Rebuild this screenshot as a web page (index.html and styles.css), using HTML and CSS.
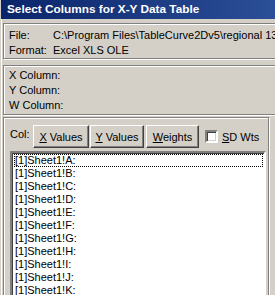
FILE: index.html
```html
<!DOCTYPE html>
<html>
<head>
<meta charset="utf-8">
<link rel="stylesheet" href="styles.css">
</head>
<body>
<div class="window">
  <div class="titlebar">Select Columns for X-Y Data Table</div>
  <div class="client">
    <div class="group group-open file-group">
      <div class="kv"><span class="k">File:</span><span class="v">C:\Program Files\TableCurve2Dv5\regional 13</span></div>
      <div class="kv"><span class="k">Format:</span><span class="v">Excel XLS OLE</span></div>
    </div>
    <div class="group group-open cols-group">
      <div class="line">X Column:</div>
      <div class="line">Y Column:</div>
      <div class="line">W Column:</div>
    </div>
    <div class="group select-group">
      <div class="toolbar">
        <span class="col-label">Col:</span>
        <button class="btn btn-x"><u>X</u> Values</button>
        <button class="btn btn-y"><u>Y</u> Values</button>
        <button class="btn btn-w"><u>W</u>eights</button>
        <label class="check"><span class="box"></span><span><u>S</u>D Wts</span></label>
      </div>
      <div class="listbox">
        <div class="item focused">[1]Sheet1!A:</div>
        <div class="item">[1]Sheet1!B:</div>
        <div class="item">[1]Sheet1!C:</div>
        <div class="item">[1]Sheet1!D:</div>
        <div class="item">[1]Sheet1!E:</div>
        <div class="item">[1]Sheet1!F:</div>
        <div class="item">[1]Sheet1!G:</div>
        <div class="item">[1]Sheet1!H:</div>
        <div class="item">[1]Sheet1!I:</div>
        <div class="item">[1]Sheet1!J:</div>
        <div class="item">[1]Sheet1!K:</div>
      </div>
    </div>
  </div>
</div>
</body>
</html>
```
FILE: styles.css
```css
html, body {
  margin: 0;
  padding: 0;
  width: 275px;
  height: 295px;
  overflow: hidden;
  background: #d4d0c8;
}
.window {
  width: 275px;
  height: 295px;
  box-sizing: border-box;
  border-left: 1px solid #d4d0c8;
  box-shadow: inset 1px 0 0 #ffffff;
  padding-left: 2px;
  display: flex;
  flex-direction: column;
  font-family: "Liberation Sans", Arial, sans-serif;
  font-size: 11px;
  color: #000;
  overflow: hidden;
}
.titlebar {
  height: 19px;
  line-height: 19px;
  margin-left: -2px;
  padding-left: 6px;
  background: linear-gradient(to right, #0a246a, #2b4f98);
  color: #fff;
  font-weight: bold;
  font-size: 11.8px;
  white-space: nowrap;
  flex: none;
}
.client {
  display: flex;
  flex-direction: column;
  padding-top: 4px;
  flex: 1;
  min-height: 0;
}
.group {
  border: 1px solid #808080;
  box-shadow: inset 1px 1px 0 #fff, 1px 1px 0 #fff;
  flex: none;
}
.group-open {
  margin-right: -30px;
}
.file-group {
  padding: 4px 0 0 5px;
  height: 30px;
}
.kv {
  display: flex;
  height: 15px;
  line-height: 15px;
  white-space: nowrap;
}
.k {
  width: 44px;
  flex: none;
}
.cols-group {
  margin-top: 6px;
  padding: 2px 0 0 5px;
  height: 46px;
}
.line {
  height: 15px;
  line-height: 15px;
}
.select-group {
  margin-top: 2px;
  margin-right: 6px;
  flex: 1;
  border-bottom: none;
  display: flex;
  flex-direction: column;
  padding: 7px 2px 0 6px;
}
.toolbar {
  display: flex;
  align-items: flex-start;
  height: 26px;
  flex: none;
}
.col-label {
  line-height: 15px;
  margin-top: 2px;
  width: 23px;
  flex: none;
}
.btn {
  font-family: inherit;
  font-size: 11px;
  height: 23px;
  padding: 0;
  background: #d4d0c8;
  border: 1px solid;
  border-color: #fff #404040 #404040 #fff;
  box-shadow: inset -1px -1px 0 #808080;
  color: #000;
  flex: none;
}
.btn-x { width: 56px; }
.btn-y { width: 54px; margin-left: 1px; }
.btn-w { width: 53px; margin-left: 2px; }
.check {
  display: flex;
  align-items: center;
  margin-left: 6px;
  height: 23px;
  gap: 4px;
  white-space: nowrap;
}
.box {
  width: 9px;
  height: 9px;
  background: #fff;
  border: 2px solid;
  border-color: #808080 #fff #fff #808080;
  box-shadow: inset 1px 1px 0 #404040, inset -1px -1px 0 #d4d0c8;
}
.listbox {
  flex: 1;
  background: #fff;
  border: 2px solid;
  border-color: #808080 #fff #fff #808080;
  border-bottom: none;
  box-shadow: inset 1px 1px 0 #404040;
  padding: 1px 1px 0 2px;
  overflow: hidden;
}
.item {
  height: 13px;
  line-height: 13px;
  padding-left: 1px;
  white-space: nowrap;
}
.focused {
  outline: 1px dotted #000;
  outline-offset: -1px;
}
```
